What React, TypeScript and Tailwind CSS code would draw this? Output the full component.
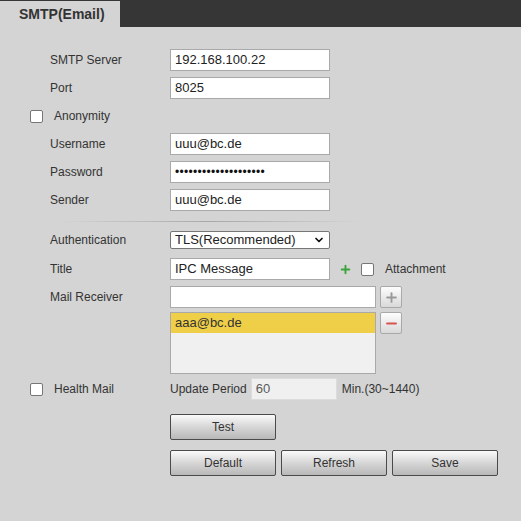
import { ChevronDown, Plus, Minus } from 'lucide-react';

const font = { fontFamily: '"Liberation Sans", Arial, sans-serif' };

function Checkbox() {
  return <span className="block w-[13px] h-[13px] bg-white border border-[#767676] rounded-[2px] shrink-0" />;
}

function TextBox({ value, width = 'w-[160px]' }: { value: string; width?: string }) {
  return (
    <div className={`${width} h-[22px] bg-white border border-[#a9a9a9] flex items-center px-[4px] text-[13px] text-[#222] shrink-0`}>
      {value}
    </div>
  );
}

function Row({ label, children, className = '' }: { label: string; children: React.ReactNode; className?: string }) {
  return (
    <div className={`flex items-center h-[22px] pl-[50px] ${className}`}>
      <div className="w-[120px] text-[12px] text-[#333]">{label}</div>
      {children}
    </div>
  );
}

function CheckRow({ label, className = '' }: { label: string; className?: string }) {
  return (
    <div className={`flex items-center h-[22px] pl-[30px] ${className}`}>
      <Checkbox />
      <span className="ml-[11px] text-[12px] text-[#333]">{label}</span>
    </div>
  );
}

function Btn({ label }: { label: string }) {
  return (
    <button className="w-[106px] h-[26px] rounded-[2px] border border-[#4a4a4a] bg-gradient-to-b from-[#fafafa] via-[#d6d6d6] to-[#b8b8b8] text-[12px] text-[#333] flex items-center justify-center">
      {label}
    </button>
  );
}

function SmallBtn({ children }: { children: React.ReactNode }) {
  return (
    <div className="w-[22px] h-[22px] ml-[4px] rounded-[2px] border border-[#a9a9a9] bg-gradient-to-b from-[#fdfdfd] to-[#d9d9d9] flex items-center justify-center">
      {children}
    </div>
  );
}

export default function App() {
  return (
    <div className="w-[521px] h-[521px] bg-[#d4d4d4] overflow-hidden" style={font}>
      {/* Tab bar */}
      <div className="h-[27px] bg-[#363636] flex items-end">
        <div className="w-[120px] h-[26px] bg-[#d4d4d4] flex items-center pl-[19px] text-[14px] font-bold text-[#333]">
          SMTP(Email)
        </div>
      </div>

      <div className="flex flex-col pt-[22px]">
        <Row label="SMTP Server">
          <TextBox value="192.168.100.22" />
        </Row>
        <Row label="Port" className="mt-[6px]">
          <TextBox value="8025" />
        </Row>
        <CheckRow label="Anonymity" className="mt-[6px]" />
        <Row label="Username" className="mt-[6px]">
          <TextBox value="uuu@bc.de" />
        </Row>
        <Row label="Password" className="mt-[6px]">
          <div className="w-[160px] h-[22px] bg-white border border-[#a9a9a9] flex items-center px-[4px] text-[12px] tracking-[0.3px] text-[#111]">
            ••••••••••••••••••••
          </div>
        </Row>
        <Row label="Sender" className="mt-[6px]">
          <TextBox value="uuu@bc.de" />
        </Row>

        <div className="mt-[10px] ml-[60px] w-[300px] h-px bg-gradient-to-r from-transparent via-[#a8a8a8] to-transparent" />

        <div className="flex items-center h-[18px] pl-[50px] mt-[9px]">
          <div className="w-[120px] text-[12px] text-[#333]">Authentication</div>
          <div className="w-[160px] h-[18px] bg-white border border-[#767676] rounded-[2px] flex items-center justify-between pl-[4px] pr-[4px] text-[13px] text-[#222]">
            <span>TLS(Recommended)</span>
            <ChevronDown size={12} strokeWidth={3.5} color="#111" />
          </div>
        </div>

        <Row label="Title" className="mt-[9px]">
          <TextBox value="IPC Message" />
          <Plus size={13} strokeWidth={3.5} color="#3aa33a" className="ml-[9px]" />
          <span className="ml-[9px]">
            <Checkbox />
          </span>
          <span className="ml-[11px] text-[12px] text-[#333]">Attachment</span>
        </Row>

        <Row label="Mail Receiver" className="mt-[6px]">
          <TextBox value="" width="w-[206px]" />
          <SmallBtn>
            <Plus size={15} strokeWidth={3} color="#9a9a9a" />
          </SmallBtn>
        </Row>

        <div className="flex items-start pl-[170px] mt-[4px]">
          <div className="w-[206px] h-[62px] bg-[#f0f0f0] border border-[#a9a9a9]">
            <div className="h-[20px] bg-[#f0cf48] flex items-center px-[4px] text-[13px] text-[#333]">aaa@bc.de</div>
          </div>
          <SmallBtn>
            <Minus size={15} strokeWidth={3.5} color="#d9534f" />
          </SmallBtn>
        </div>

        <div className="flex items-center h-[22px] pl-[30px] mt-[4px]">
          <div className="w-[140px] flex items-center">
            <Checkbox />
            <span className="ml-[11px] text-[12px] text-[#333]">Health Mail</span>
          </div>
          <span className="text-[12px] text-[#333]">Update Period</span>
          <div className="ml-[4px] w-[86px] h-[22px] bg-[#f0f0f0] border border-[#dcdcdc] flex items-center px-[4px] text-[13px] text-[#5a5a5a]">
            60
          </div>
          <span className="ml-[5px] text-[12px] text-[#333]">Min.(30~1440)</span>
        </div>

        <div className="pl-[170px] mt-[14px]">
          <Btn label="Test" />
        </div>
        <div className="pl-[170px] mt-[10px] flex gap-[5px]">
          <Btn label="Default" />
          <Btn label="Refresh" />
          <Btn label="Save" />
        </div>
      </div>
    </div>
  );
}
